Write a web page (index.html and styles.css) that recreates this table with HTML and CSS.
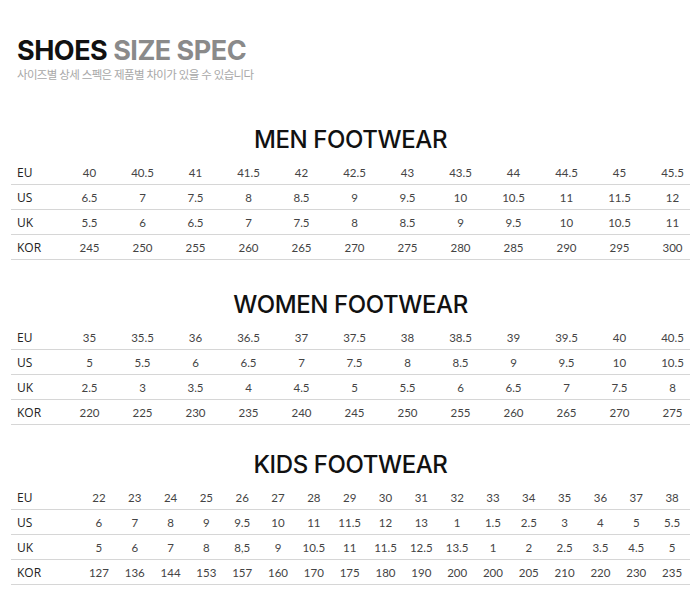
FILE: index.html
```html
<!DOCTYPE html>
<html lang="ko">
<head>
<meta charset="utf-8">
<title>Shoes Size Spec</title>
<link rel="stylesheet" href="styles.css">
</head>
<body>
<div class="page">
  <header class="head">
    <h1 class="head__title"><span class="head__dark">SHOES</span> <span class="head__light">SIZE SPEC</span></h1>
    <p class="head__sub">사이즈별 상세 스펙은 제품별 차이가 있을 수 있습니다</p>
  </header>

  <section class="chart chart--men">
    <h2 class="chart__title">MEN FOOTWEAR</h2>
    <div class="table table--adult">
      <div class="row"><span class="lbl">EU</span><span>40</span><span>40.5</span><span>41</span><span>41.5</span><span>42</span><span>42.5</span><span>43</span><span>43.5</span><span>44</span><span>44.5</span><span>45</span><span>45.5</span></div>
      <div class="row"><span class="lbl">US</span><span>6.5</span><span>7</span><span>7.5</span><span>8</span><span>8.5</span><span>9</span><span>9.5</span><span>10</span><span>10.5</span><span>11</span><span>11.5</span><span>12</span></div>
      <div class="row"><span class="lbl">UK</span><span>5.5</span><span>6</span><span>6.5</span><span>7</span><span>7.5</span><span>8</span><span>8.5</span><span>9</span><span>9.5</span><span>10</span><span>10.5</span><span>11</span></div>
      <div class="row"><span class="lbl">KOR</span><span>245</span><span>250</span><span>255</span><span>260</span><span>265</span><span>270</span><span>275</span><span>280</span><span>285</span><span>290</span><span>295</span><span>300</span></div>
    </div>
  </section>

  <section class="chart chart--women">
    <h2 class="chart__title">WOMEN FOOTWEAR</h2>
    <div class="table table--adult">
      <div class="row"><span class="lbl">EU</span><span>35</span><span>35.5</span><span>36</span><span>36.5</span><span>37</span><span>37.5</span><span>38</span><span>38.5</span><span>39</span><span>39.5</span><span>40</span><span>40.5</span></div>
      <div class="row"><span class="lbl">US</span><span>5</span><span>5.5</span><span>6</span><span>6.5</span><span>7</span><span>7.5</span><span>8</span><span>8.5</span><span>9</span><span>9.5</span><span>10</span><span>10.5</span></div>
      <div class="row"><span class="lbl">UK</span><span>2.5</span><span>3</span><span>3.5</span><span>4</span><span>4.5</span><span>5</span><span>5.5</span><span>6</span><span>6.5</span><span>7</span><span>7.5</span><span>8</span></div>
      <div class="row"><span class="lbl">KOR</span><span>220</span><span>225</span><span>230</span><span>235</span><span>240</span><span>245</span><span>250</span><span>255</span><span>260</span><span>265</span><span>270</span><span>275</span></div>
    </div>
  </section>

  <section class="chart chart--kids">
    <h2 class="chart__title">KIDS FOOTWEAR</h2>
    <div class="table table--kids">
      <div class="row"><span class="lbl">EU</span><span>22</span><span>23</span><span>24</span><span>25</span><span>26</span><span>27</span><span>28</span><span>29</span><span>30</span><span>31</span><span>32</span><span>33</span><span>34</span><span>35</span><span>36</span><span>37</span><span>38</span></div>
      <div class="row"><span class="lbl">US</span><span>6</span><span>7</span><span>8</span><span>9</span><span>9.5</span><span>10</span><span>11</span><span>11.5</span><span>12</span><span>13</span><span>1</span><span>1.5</span><span>2.5</span><span>3</span><span>4</span><span>5</span><span>5.5</span></div>
      <div class="row"><span class="lbl">UK</span><span>5</span><span>6</span><span>7</span><span>8</span><span>8,5</span><span>9</span><span>10.5</span><span>11</span><span>11.5</span><span>12.5</span><span>13.5</span><span>1</span><span>2</span><span>2.5</span><span>3.5</span><span>4.5</span><span>5</span></div>
      <div class="row"><span class="lbl">KOR</span><span>127</span><span>136</span><span>144</span><span>153</span><span>157</span><span>160</span><span>170</span><span>175</span><span>180</span><span>190</span><span>200</span><span>200</span><span>205</span><span>210</span><span>220</span><span>230</span><span>235</span></div>
    </div>
  </section>
</div>
</body>
</html>
```

FILE: styles.css
```css
html, body {
  margin: 0;
  padding: 0;
  background: #ffffff;
}

.page {
  width: 679px;
  padding: 37px 10px 0 11px;
}

.head__title {
  margin: 0 0 0 6px;
  font-family: Inter, "Liberation Sans", sans-serif;
  font-weight: 700;
  font-size: 27px;
  line-height: 28px;
  letter-spacing: -0.5px;
}

.head__dark {
  color: #111111;
}

.head__light {
  color: #8a8a8a;
}

.head__sub {
  margin: 2px 0 0 6px;
  font-family: "Noto Sans CJK KR", sans-serif;
  font-size: 11.5px;
  line-height: 14px;
  letter-spacing: -0.65px;
  color: #a8a8a8;
}

.chart--men {
  margin-top: 44px;
}

.chart--women {
  margin-top: 30px;
}

.chart--kids {
  margin-top: 25px;
}

.chart__title {
  margin: 0 0 5px;
  text-align: center;
  font-family: Inter, "Liberation Sans", sans-serif;
  font-weight: 500;
  font-size: 24px;
  line-height: 30px;
  letter-spacing: -0.4px;
  color: #111111;
}

.row {
  display: grid;
  height: 24px;
  align-items: center;
  border-bottom: 1px solid #d6d6d6;
  font-family: Lato, "Liberation Sans", sans-serif;
  font-size: 11.5px;
  color: #444444;
  text-align: center;
}

.table--adult .row {
  grid-template-columns: 43px repeat(12, 1fr);
}

.table--adult .row span {
  padding-left: 18px;
}

.table--kids .row {
  grid-template-columns: 70px repeat(17, 1fr);
}

.table .row .lbl {
  padding-left: 6px;
  text-align: left;
  font-family: "Open Sans", sans-serif;
  font-size: 12px;
  color: #222222;
}
```
